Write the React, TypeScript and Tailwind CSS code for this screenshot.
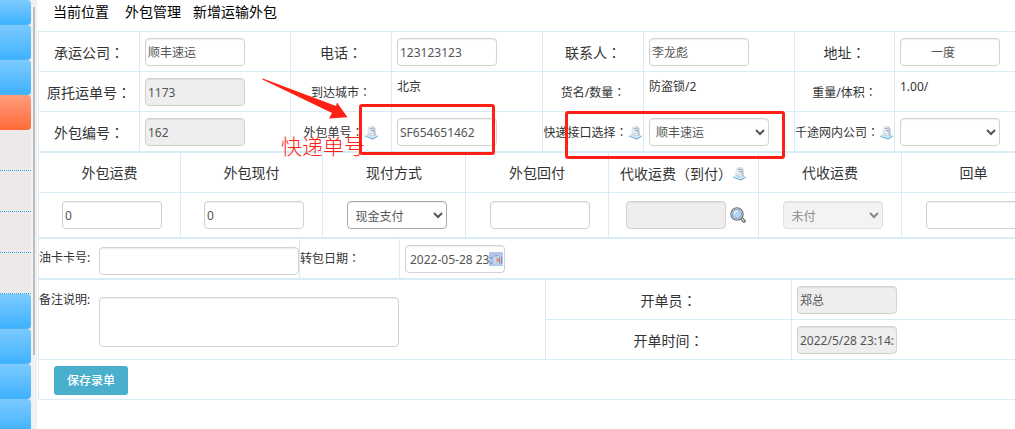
import type { ReactNode } from "react";
import { clsx } from "clsx";

const HelpIcon = () => (
  <svg viewBox="0 0 15 15" className="size-[15px] shrink-0">
    <path d="M0.5 11.6 4 9.4 14.3 11.2 9.2 14.6Z" fill="#4f9fd0" />
    <path d="M0.5 11 4 8.8 14.3 10.6 9.2 13.6Z" fill="#cbe6f4" />
    <path d="M4.2 1.6 8.8 0.8 11.2 3.2 12 10.4 7.8 11.6 3 10.2Z" fill="#e3e8ee" />
    <path d="M8.8 0.8 11.2 3.2 12 10.4 9.6 11.2Z" fill="#bcc7d2" />
    <path d="M5.8 3.4H8.6M7.2 5.6H9.4" stroke="#7f93a8" strokeWidth="0.9" />
    <path d="M3.8 9.2 8 10.6" stroke="#a5cbe2" strokeWidth="1" />
  </svg>
);

const SearchIcon = () => (
  <svg viewBox="0 0 16 16" className="size-4">
    <path d="M11 11 14.1 14.1" stroke="#5a5a5a" strokeWidth="3.4" strokeLinecap="round" />
    <path d="M11.4 11.4 14 14" stroke="#d0d0d0" strokeWidth="1.5" strokeLinecap="round" />
    <circle cx="7" cy="7" r="6.2" fill="#e0e0e0" stroke="#6c6c6c" strokeWidth="1.1" />
    <circle cx="7" cy="7" r="4.5" fill="#b3d3f5" stroke="#7393ba" strokeWidth="0.9" />
    <path d="M4.4 7.4A2.7 2.7 0 0 1 7.6 4.3" stroke="#eef7ff" strokeWidth="1.4" fill="none" />
  </svg>
);

const CalendarIcon = () => (
  <svg viewBox="0 0 14 14" className="size-[14px]">
    <rect width="14" height="14" rx="1" fill="#7f9fdc" opacity="0.6" />
    <rect x="5" y="4" width="7.5" height="8.5" fill="#dfe6f5" opacity="0.6" />
    <path d="M10.5 4.5V12M12.4 4.5V12" stroke="#77839f" strokeWidth="0.8" />
    <rect x="7.6" y="6.4" width="2.6" height="3" fill="#ef8f6b" />
  </svg>
);

const field =
  "h-7 rounded border border-[#d2d2d2] bg-white text-xs text-[#555] shadow-[inset_0_1px_1px_rgba(0,0,0,0.07)] outline-none";

type CellProps = { className?: string; children?: ReactNode };

const Cell = ({ className, children }: CellProps) => (
  <div className={clsx("flex min-w-0 border-l border-[#d8ecf5]", className)}>{children}</div>
);

type LabelProps = { text: string; id?: string; small?: boolean; help?: boolean };

const LabelCell = ({ text, id, small, help }: LabelProps) => (
  <Cell className="h-10 items-center justify-center border-t pt-px">
    <label htmlFor={id} className={clsx("whitespace-nowrap", small ? "text-xs" : "text-sm")}>
      {text}
      <span className="font-['Noto_Sans_CJK_TC',sans-serif]">：</span>
    </label>
    {help && <HelpIcon />}
  </Cell>
);

const ValueCell = ({ children }: CellProps) => (
  <Cell className="h-10 items-center border-t pt-px pl-[5px]">{children}</Cell>
);

const TextCell = ({ children }: CellProps) => (
  <Cell className="h-10 border-t pt-[6px] pl-[5px] text-xs leading-[18px]">{children}</Cell>
);

type InputProps = { id: string; value?: string; gray?: boolean; className?: string };

const TextInput = ({ id, value = "", gray, className = "w-[100px] px-[2px]" }: InputProps) => (
  <input
    id={id}
    type="text"
    defaultValue={value}
    readOnly={gray}
    className={clsx(field, className, gray && "bg-[#eee]!")}
  />
);

const HeadCell = ({ id, children }: { id: string; children: ReactNode }) => (
  <Cell className="h-[41px] items-center justify-center border-t-2 pt-px">
    <label htmlFor={id} className="text-sm whitespace-nowrap">
      {children}
    </label>
    {id === "collect" && <HelpIcon />}
  </Cell>
);

const PayCell = ({ children }: CellProps) => (
  <Cell className="h-[45px] items-center justify-center border-t pl-[5px]">{children}</Cell>
);

const MenuItem = ({ className = "h-[35px]" }: CellProps) => (
  <div
    className={clsx(
      "shrink-0 rounded-r border-b border-[#4db4f5] bg-linear-to-b from-[#7bcaff] to-[#3cb2ff]",
      className,
    )}
  />
);

const Sidebar = () => (
  <nav className="flex w-[31px] shrink-0 flex-col overflow-hidden bg-[#ece9e8]">
    <MenuItem className="h-[25px]" />
    <MenuItem />
    <MenuItem />
    <div className="h-[35px] shrink-0 rounded-r bg-linear-to-b from-[#ff9c7c] to-[#ff6a35]" />
    <div className="h-[41px] shrink-0 border-b border-dotted border-[#2fabf5]" />
    <div className="h-[41px] shrink-0 border-b border-dotted border-[#2fabf5]" />
    <div className="h-[41px] shrink-0 border-b border-dotted border-[#2fabf5]" />
    <div className="h-[41px] shrink-0 border-b border-dotted border-[#2fabf5]" />
    <MenuItem />
    <MenuItem />
    <MenuItem />
    <MenuItem />
  </nav>
);

const Annotations = () => (
  <div className="pointer-events-none text-[#ff2015]">
    <svg viewBox="0 0 86 42" className="absolute top-[78px] left-[262px] h-[42px] w-[86px]">
      <path d="M0 1.2 0.8 0.4 74 28 75 24.5 85.5 39.2 67 40.5 70 35Z" fill="currentColor" />
    </svg>
    <span className="absolute top-[132px] left-[281px] text-[21px] leading-[28px] font-light">
      快递单号
    </span>
    <div className="absolute top-[104px] left-[359px] h-[51px] w-[136px] rounded-[3px] border-3 border-current" />
    <div className="absolute top-[111px] left-[565px] h-[48px] w-[220px] rounded-[3px] border-3 border-current" />
  </div>
);

export default function App() {
  return (
    <div className="relative flex h-screen overflow-hidden bg-white font-['Noto_Sans','Noto_Sans_CJK_SC',sans-serif] text-[#333]">
      <Sidebar />
      <div className="w-[6px] shrink-0 bg-[#f0f1f3] px-[2px] pt-[7px]">
        <div className="h-[348px] bg-[#bcbec0]" />
      </div>

      <main className="min-w-0 flex-1 overflow-hidden pl-px">
        <div className="flex h-[31px] pt-[2px] pl-[15px] text-sm text-black">
          <span className="mr-4">当前位置</span>
          <span className="mr-3">外包管理</span>
          <span>新增运输外包</span>
        </div>

        <form>
          <div className="grid grid-cols-[101px_151px_101px_151px_101px_151px_100px_1fr]">
            <LabelCell id="carrier" text="承运公司" />
            <ValueCell>
              <TextInput id="carrier" value="顺丰速运" />
            </ValueCell>
            <LabelCell id="phone" text="电话" />
            <ValueCell>
              <TextInput id="phone" value="123123123" />
            </ValueCell>
            <LabelCell id="contact" text="联系人" />
            <ValueCell>
              <TextInput id="contact" value="李龙彪" />
            </ValueCell>
            <LabelCell id="address" text="地址" />
            <ValueCell>
              <TextInput id="address" value="一度" className="w-[100px] pl-[30px]" />
            </ValueCell>

            <LabelCell id="origin" text="原托运单号" />
            <ValueCell>
              <TextInput id="origin" value="1173" gray />
            </ValueCell>
            <LabelCell text="到达城市" small />
            <TextCell>北京</TextCell>
            <LabelCell text="货名/数量" small />
            <TextCell>防盗锁/2</TextCell>
            <LabelCell text="重量/体积" small />
            <TextCell>1.00/</TextCell>

            <LabelCell id="code" text="外包编号" />
            <ValueCell>
              <TextInput id="code" value="162" gray />
            </ValueCell>
            <LabelCell id="waybill" text="外包单号" small help />
            <ValueCell>
              <TextInput id="waybill" value="SF654651462" />
            </ValueCell>
            <LabelCell id="express" text="快递接口选择" small help />
            <ValueCell>
              <select id="express" className={clsx(field, "w-[120px] pl-[2px]")}>
                <option>顺丰速运</option>
              </select>
            </ValueCell>
            <LabelCell id="company" text="千途网内公司" small help />
            <ValueCell>
              <select id="company" className={clsx(field, "w-[100px] pl-[2px]")}>
                <option></option>
              </select>
            </ValueCell>
          </div>

          <div className="grid grid-cols-[142px_142px_143px_143px_150px_143px_minmax(144px,1fr)]">
            <HeadCell id="freight">外包运费</HeadCell>
            <HeadCell id="cash">外包现付</HeadCell>
            <HeadCell id="method">现付方式</HeadCell>
            <HeadCell id="back">外包回付</HeadCell>
            <HeadCell id="collect">
              代收运费<span className="font-['Noto_Sans_CJK_TC',sans-serif]">（</span>到付
              <span className="font-['Noto_Sans_CJK_TC',sans-serif]">）</span>
            </HeadCell>
            <HeadCell id="status">代收运费</HeadCell>
            <HeadCell id="receipt">回单</HeadCell>

            <PayCell>
              <TextInput id="freight" value="0" />
            </PayCell>
            <PayCell>
              <TextInput id="cash" value="0" />
            </PayCell>
            <PayCell>
              <select id="method" className={clsx(field, "w-[100px] border-[#aaa]! pt-[3px] pl-1")}>
                <option>现金支付</option>
              </select>
            </PayCell>
            <PayCell>
              <TextInput id="back" />
            </PayCell>
            <PayCell>
              <TextInput id="collect" gray />
              <button type="button" aria-label="搜索" className="ml-1">
                <SearchIcon />
              </button>
            </PayCell>
            <PayCell>
              <select
                id="status"
                disabled
                className={clsx(field, "w-[100px] bg-[#eee]! pt-[3px] pl-1 opacity-70")}
              >
                <option>未付</option>
              </select>
            </PayCell>
            <PayCell>
              <TextInput id="receipt" />
            </PayCell>
          </div>

          <div className="grid grid-cols-[261px_100px_1fr] text-xs">
            <Cell className="h-[41px] border-t-2">
              <label htmlFor="oil" className="w-[60px] shrink-0 pt-[11px]">
                油卡卡号:
              </label>
              <div className="pt-2">
                <TextInput id="oil" className="w-[200px] px-[2px]" />
              </div>
            </Cell>
            <Cell className="h-[41px] border-t-2 pt-[11px]">
              <label htmlFor="date">
                转包日期<span className="font-['Noto_Sans_CJK_TC',sans-serif]">：</span>
              </label>
            </Cell>
            <Cell className="h-[41px] border-t-2 pt-[6px] pl-[5px]">
              <div className="relative h-7">
                <TextInput id="date" value="2022-05-28 23:14" className="w-[100px] pr-[2px] pl-1" />
                <span className="absolute top-[7px] right-[2px]">
                  <CalendarIcon />
                </span>
              </div>
            </Cell>
          </div>

          <div className="grid grid-cols-[507px_246px_1fr]">
            <Cell className="row-span-2 border-t-2 text-xs">
              <label htmlFor="remark" className="w-[60px] shrink-0 pt-3">
                备注说明:
              </label>
              <textarea
                id="remark"
                className={clsx(field, "mt-[17px] h-[50px]! w-[300px] resize-none")}
              />
            </Cell>
            <Cell className="h-[41px] items-center justify-center border-t-2 pt-px">
              <label htmlFor="clerk" className="text-sm">
                开单员<span className="font-['Noto_Sans_CJK_TC',sans-serif]">：</span>
              </label>
            </Cell>
            <Cell className="h-[41px] items-center border-t-2 pt-px pl-[5px]">
              <TextInput id="clerk" value="郑总" gray />
            </Cell>
            <LabelCell id="created" text="开单时间" />
            <ValueCell>
              <TextInput id="created" value="2022/5/28 23:14:31" gray />
            </ValueCell>
          </div>

          <div className="border-y border-l border-[#d8ecf5] pt-[6px] pb-1 pl-[15px]">
            <button
              type="button"
              className="block h-[29px] w-[74px] rounded-[3px] bg-[#4aaecd] text-xs font-medium text-white"
            >
              保存录单
            </button>
          </div>
        </form>
      </main>

      <Annotations />
    </div>
  );
}
